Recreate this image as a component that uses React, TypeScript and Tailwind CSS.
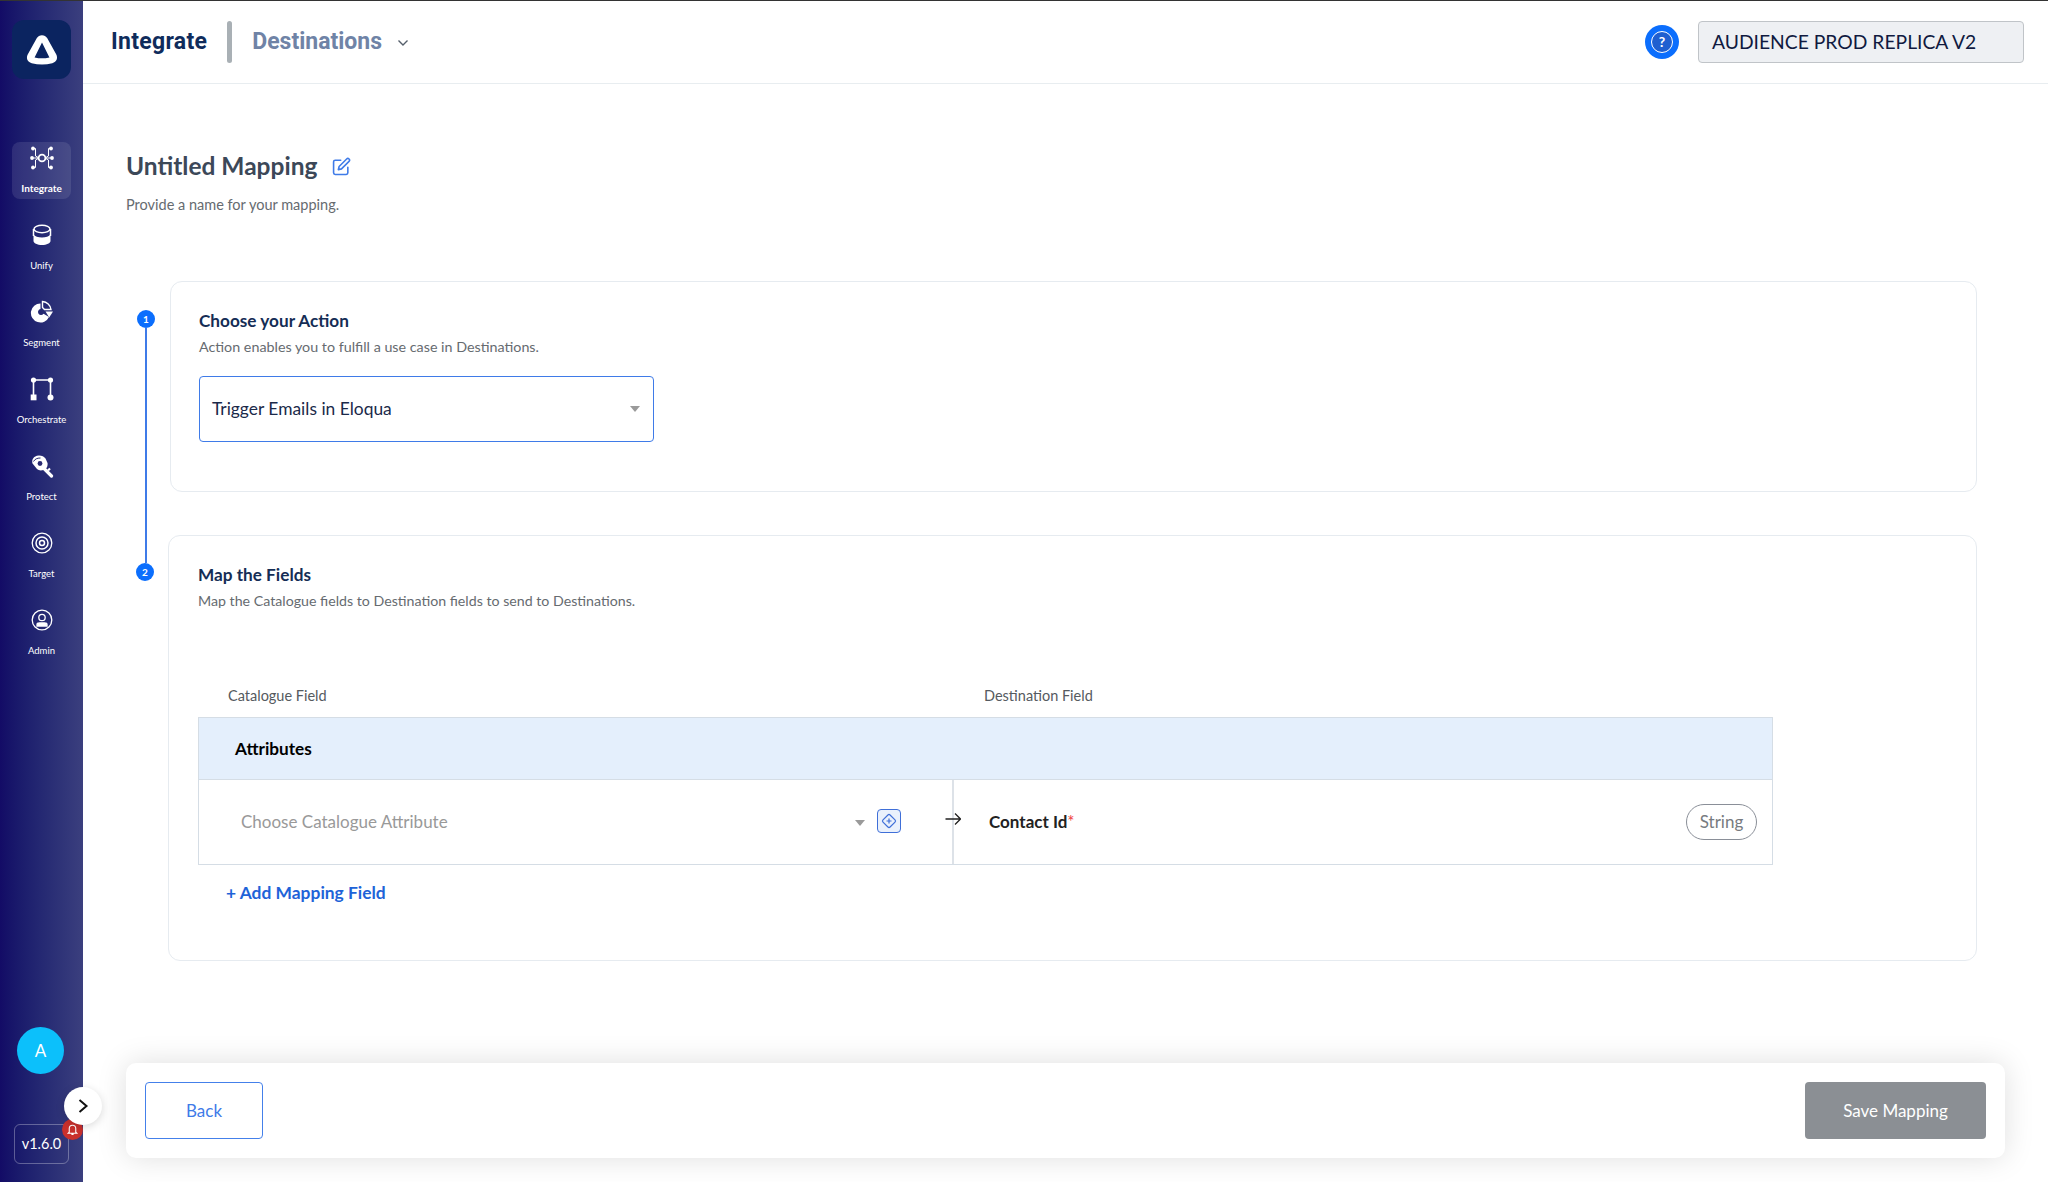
import React from "react";

const NAV = [
  { label: "Integrate", icon: "integrate", active: true },
  { label: "Unify", icon: "unify" },
  { label: "Segment", icon: "segment" },
  { label: "Orchestrate", icon: "orchestrate" },
  { label: "Protect", icon: "protect" },
  { label: "Target", icon: "target" },
  { label: "Admin", icon: "admin" },
];

function NavIcon({ name }: { name: string }) {
  const c = "#ffffff";
  if (name === "integrate")
    return (
      <svg width="24" height="24" viewBox="0 0 24 24" fill="none" stroke={c} strokeWidth="1">
        <circle cx="12" cy="12" r="3.4" strokeWidth="1.8" />
        <path d="M3 2.5h2.5v7.5l3.5 2M21 2.5h-2.5v7.5l-3.5 2M3 21.5h2.500v-7.500l3.500-2M21 21.500h-2.500v-7.500l-3.500-2M2.500 12H9M21.500 12H15" />
        <g fill={c} stroke="none">
          <circle cx="3" cy="2.5" r="1.900" />
          <circle cx="21" cy="2.5" r="1.900" />
          <circle cx="2" cy="12" r="1.900" />
          <circle cx="22" cy="12" r="1.900" />
          <circle cx="3" cy="21.5" r="1.900" />
          <circle cx="21" cy="21.5" r="1.900" />
        </g>
      </svg>
    );
  if (name === "unify")
    return (
      <svg width="20" height="22" viewBox="0 0 20 22" fill="none">
        <path d="M1.500 10.500c1.500 2 4.500 3 8.500 3s7-1 8.500-3V17c0 2.300-3.800 4-8.500 4s-8.500-1.700-8.500-4z" fill={c} />
        <ellipse cx="10" cy="5" rx="8" ry="3.700" stroke={c} strokeWidth="1.500" />
        <path d="M1.500 5V12M18.500 5V12" stroke={c} strokeWidth="1.500" />
      </svg>
    );
  if (name === "segment")
    return (
      <svg width="24" height="24" viewBox="0 0 24 24" fill="none">
        <path d="M10.500 3.500A9.500 9.500 0 1 0 19 17l-5.500-3.200a3 3 0 1 1-3-4.700z" fill={c} />
        <path d="M12.500 1.500A9 9 0 0 1 21 9.500h-6.500l-2-2z" stroke={c} strokeWidth="1.400" />
        <path d="M15.500 11.500H23l-3.800 6z" fill={c} />
      </svg>
    );
  if (name === "orchestrate")
    return (
      <svg width="24" height="24" viewBox="0 0 24 24" fill="none" stroke={c} strokeWidth="1.600">
        <path d="M3.500 3h17M3.500 3v17M20.500 3v17" />
        <g fill={c} stroke="none">
          <circle cx="3.500" cy="3" r="2.600" />
          <circle cx="20.500" cy="3" r="2.600" />
          <rect x="0.700" y="17.500" width="5.800" height="5.800" />
          <circle cx="20.500" cy="20.500" r="3" />
        </g>
      </svg>
    );
  if (name === "protect")
    return (
      <svg width="24" height="24" viewBox="0 0 24 24" fill="none">
        <path d="M9 1.500c3 0 5 1 6.500 3l2 4.500c.5 3-1 6-4 7-3 .8-5 .3-6.500-1L2.500 9.500C1.500 6 3 2 9 1.500z" fill={c} />
        <path d="M3.500 7.500C5 5 7 4 10.500 4" stroke="#2a2b72" strokeWidth="1" />
        <circle cx="10" cy="9.500" r="2.400" fill="#2a2b72" />
        <path d="M14 14.500l7.500 7.500" stroke={c} strokeWidth="3.200" strokeLinecap="round" />
        <path d="M18 16.500l2-2" stroke={c} strokeWidth="2.200" />
      </svg>
    );
  if (name === "target")
    return (
      <svg width="22" height="22" viewBox="0 0 22 22" fill="none" stroke={c}>
        <circle cx="11" cy="11" r="9.800" strokeWidth="1.300" />
        <circle cx="11" cy="11" r="6" strokeWidth="1.500" />
        <circle cx="11" cy="11" r="2.500" strokeWidth="1.500" />
      </svg>
    );
  return (
    <svg width="22" height="22" viewBox="0 0 22 22" fill="none" stroke={c} strokeWidth="1.300">
      <circle cx="11" cy="11" r="9.800" />
      <circle cx="11" cy="8.500" r="3.200" />
      <path d="M6 15.500c0-.9 1.200-1.500 2.500-1.500h5c1.300 0 2.500.6 2.500 1.500V17H6z" fill={c} />
    </svg>
  );
}

function Caret() {
  return <span className="h-0 w-0 border-x-[5.5px] border-t-[6px] border-x-transparent border-t-[#9a9a9a]" />;
}

export default function App() {
  return (
    <div className="flex h-[1182px] w-[2048px] overflow-hidden border-t border-[#333333] bg-white font-['Lato',sans-serif]">
      <aside className="relative flex w-[83px] shrink-0 flex-col bg-linear-to-r from-[#130b66] to-[#3b3f7e]">
        <div className="mx-[12px] mt-[19px] flex h-[59px] w-[59px] items-center justify-center rounded-xl bg-[#0b2460]">
          <svg width="32" height="32" viewBox="0 0 28 28" fill="none">
            <path
              fillRule="evenodd"
              d="M14 1C16 1 17.500 2 18.500 3.500L26.500 18C28 21 27 24.500 23 25.500C17 27 11 27 5 25.500C1 24.500 0 21 1.500 18L9.500 3.500C10.500 2 12 1 14 1zM14 7.500L7.500 20.500C12 21.500 16 21.500 20.500 20.500z"
              fill="#ffffff"
            />
          </svg>
        </div>
        <nav className="mt-[63px] flex flex-col gap-[20px] px-[12px]">
          {NAV.map((n) => (
            <div
              key={n.label}
              className={
                n.active
                  ? "flex h-[57px] flex-col items-center rounded-lg bg-white/10 pt-[3px]"
                  : "flex h-[57px] flex-col items-center pt-[3px]"
              }
            >
              <div className="flex h-[26px] items-center justify-center">
                <NavIcon name={n.icon} />
              </div>
              <span
                className={
                  n.active
                    ? "mt-[10px] text-[10px] leading-[14px] font-bold whitespace-nowrap text-white"
                    : "mt-[11px] text-[9.500px] leading-[14px] whitespace-nowrap text-white"
                }
              >
                {n.label}
              </span>
            </div>
          ))}
        </nav>
        <div className="mt-auto mb-[18px] flex flex-col px-[14px]">
          <div className="ml-[3px] flex h-[47px] w-[47px] items-center justify-center rounded-full bg-[#0cc0fb] text-[17px] text-white">
            A
          </div>
          <div className="relative mt-[50px] flex h-[40px] w-[55px] items-center justify-center rounded-md border border-white/30 text-[14.500px] text-white">
            v1.6.0
            <span className="absolute -top-[6px] left-[47px] flex h-[21px] w-[21px] items-center justify-center rounded-full bg-[#c9302c]">
              <svg width="13" height="13" viewBox="0 0 24 24" fill="none" stroke="#ffffff" strokeWidth="2">
                <path d="M6 17V10a6 6 0 0 1 12 0v7l2 2H4zM10 21h4" />
              </svg>
            </span>
          </div>
        </div>
        <button className="absolute top-[1086px] left-[64px] z-10 flex h-[38px] w-[38px] items-center justify-center rounded-full bg-white shadow-[0_2px_8px_rgba(0,0,0,0.15)]">
          <svg width="14" height="18" viewBox="0 0 14 18" fill="none" stroke="#111111" strokeWidth="2">
            <path d="M3.500 3l7 6-7 6" />
          </svg>
        </button>
      </aside>

      <main className="flex min-w-0 flex-1 flex-col">
        <header className="flex h-[83px] shrink-0 items-center border-b border-[#e8edf0] pr-[24px] pl-[28px]">
          <span className="font-['Roboto',sans-serif] text-[23px] font-bold tracking-[0.3px] text-[#0f2c5c]">Integrate</span>
          <span className="ml-[20px] h-[42px] w-[5px] rounded-sm bg-[#a9b0b5]" />
          <span className="ml-[20px] font-['Roboto',sans-serif] text-[23px] font-bold text-[#6f83a6]">Destinations</span>
          <svg className="mt-[2px] ml-[15px]" width="12" height="8" viewBox="0 0 12 8" fill="none" stroke="#555f6b" strokeWidth="1.400">
            <path d="M1.500 1.500 6 6l4.500-4.500" />
          </svg>
          <div className="ml-auto flex h-[34px] w-[34px] items-center justify-center rounded-full bg-[#0b6efd]">
            <div className="flex h-[22px] w-[22px] items-center justify-center rounded-full border-[1.500px] border-white bg-[#1f5fd0] text-[14px] leading-none font-bold text-white">
              ?
            </div>
          </div>
          <div className="ml-[19px] flex h-[42px] w-[326px] items-center rounded-[4px] border border-[#c0c4c8] bg-[#eef0f3] pl-[13px] text-[19.300px] text-[#101a40]">
            AUDIENCE PROD REPLICA V2
          </div>
        </header>

        <section className="pt-[65px] pl-[43px]">
          <div className="flex h-[34px] items-center">
            <h1 className="text-[24.500px] leading-[34px] font-bold text-[#3c4858]">Untitled Mapping</h1>
            <svg className="ml-[15px]" width="19" height="19" viewBox="0 0 24 24" fill="none" stroke="#3f7be8" strokeWidth="2" strokeLinecap="round" strokeLinejoin="round">
              <path d="M11 4H4a2 2 0 0 0-2 2v14a2 2 0 0 0 2 2h14a2 2 0 0 0 2-2v-7" />
              <path d="M18.500 2.500a2.100 2.100 0 0 1 3 3L12 15l-4 1 1-4z" />
            </svg>
          </div>
          <p className="mt-[12px] text-[14.500px] leading-[20px] text-[#666b70]">Provide a name for your mapping.</p>
        </section>

        <section className="mt-[66px] flex pr-[71px] pl-[54px]">
          <div className="flex w-[31px] shrink-0 flex-col items-start">
            <div className="mt-[29px] flex h-[18px] w-[18px] items-center justify-center rounded-full bg-[#0b6efd] text-[10px] font-bold text-white">1</div>
            <div className="ml-[8px] h-[235px] w-[2px] bg-[#3f7be8]" />
            <div className="-ml-[1px] flex h-[18px] w-[18px] items-center justify-center rounded-full bg-[#0b6efd] text-[10px] font-bold text-white">2</div>
          </div>
          <div className="flex min-w-0 flex-1 flex-col">
            <div className="ml-[2px] h-[211px] rounded-xl border border-[#e6ebf0] pt-[28px] pl-[28px]">
              <h2 className="text-[17.200px] leading-[22px] font-bold text-[#152d55]">Choose your Action</h2>
              <p className="mt-[5px] text-[14.300px] leading-[20px] text-[#666b70]">Action enables you to fulfill a use case in Destinations.</p>
              <div className="mt-[19px] flex h-[66px] w-[455px] items-center justify-between rounded-[4px] border-[1.500px] border-[#3f7be8] pr-[13px] pl-[12px] text-[17.400px] text-[#1b2a4a]">
                Trigger Emails in Eloqua
                <Caret />
              </div>
            </div>
            <div className="mt-[43px] h-[426px] rounded-xl border border-[#e6ebf0] pt-[28px] pl-[28px]">
              <h2 className="ml-[1px] text-[17.200px] leading-[22px] font-bold text-[#152d55]">Map the Fields</h2>
              <p className="mt-[5px] ml-[1px] text-[14.200px] leading-[20px] text-[#666b70]">Map the Catalogue fields to Destination fields to send to Destinations.</p>
              <div className="mt-[74px] flex h-[22px] items-center text-[14.500px] text-[#555a60]">
                <span className="ml-[31px] w-[756px]">Catalogue Field</span>
                <span>Destination Field</span>
              </div>
              <div className="mt-[10px] ml-[1px] w-[1575px] border border-[#d5dde5]">
                <div className="flex h-[62px] items-center border-b border-[#d5dde5] bg-[#e4effc] pl-[36px] text-[17.200px] font-bold text-black">Attributes</div>
                <div className="flex h-[84px]">
                  <div className="relative flex w-[755px] items-center border-r-2 border-[#dde2e8] pl-[42px]">
                    <span className="text-[17px] text-[#999999]">Choose Catalogue Attribute</span>
                    <span className="mt-[2px] ml-auto flex">
                      <Caret />
                    </span>
                    <span className="mr-[51px] mb-[3px] ml-[12px] flex h-[24px] w-[24px] items-center justify-center rounded-[4px] border border-[#3f6fd8] bg-[#eaf1fc]">
                      <svg width="16" height="16" viewBox="0 0 16 16" fill="none" stroke="#3f6fd8" strokeWidth="1.200">
                        <rect x="3" y="3" width="10" height="10" rx="1.500" transform="rotate(45 8 8)" />
                        <path d="M8 5.500v5M5.500 8h5" />
                      </svg>
                    </span>
                    <svg className="absolute top-[32px] -right-[9px]" width="16" height="14" viewBox="0 0 16 14" fill="none" stroke="#222222" strokeWidth="1.300">
                      <path d="M0.500 7h15M10 1.500 15.500 7 10 12.500" />
                    </svg>
                  </div>
                  <div className="flex flex-1 items-center pr-[15px] pl-[35px]">
                    <span className="text-[17px] font-bold text-[#222222]">
                      Contact Id<span className="font-normal text-[#f04040]">*</span>
                    </span>
                    <span className="ml-auto flex h-[36px] w-[71px] items-center justify-center rounded-full border border-[#8a8f98] text-[17px] text-[#777b80]">String</span>
                  </div>
                </div>
              </div>
              <div className="mt-[16px] ml-[29px] text-[17.400px] leading-[24px] font-bold text-[#1e63d8]">+ Add Mapping Field</div>
            </div>
          </div>
        </section>

        <footer className="mt-auto mr-[43px] mb-[24px] ml-[43px] flex h-[95px] items-center justify-between rounded-[10px] bg-white px-[19px] shadow-[0_0_30px_rgba(0,0,0,0.13)]">
          <button className="h-[57px] w-[118px] rounded-[4px] border-[1.500px] border-[#4480ea] text-[17px] text-[#3f7be8]">Back</button>
          <button className="h-[57px] w-[181px] rounded-[4px] bg-[#8b8f94] text-[17px] text-white">Save Mapping</button>
        </footer>
      </main>
    </div>
  );
}
